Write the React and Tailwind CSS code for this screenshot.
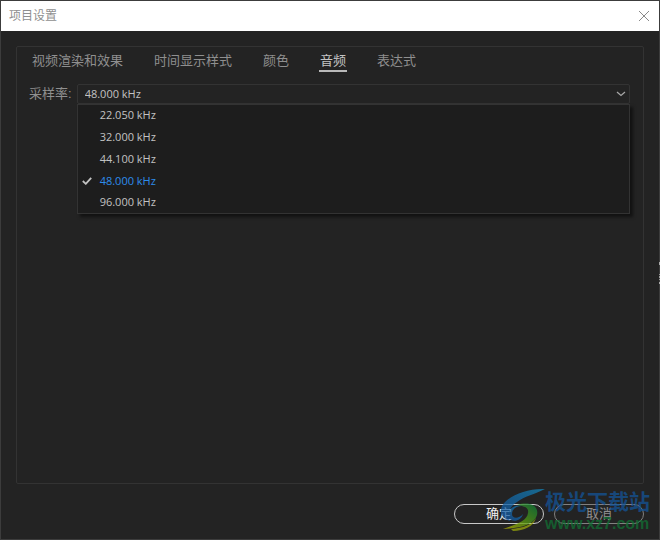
import React, { useState } from "react";

const TABS = ["视频渲染和效果", "时间显示样式", "颜色", "音频", "表达式"];
const RATES = ["22.050 kHz", "32.000 kHz", "44.100 kHz", "48.000 kHz", "96.000 kHz"];

const Watermark = () => (
    <div className="pointer-events-none absolute right-[9px] bottom-1 flex items-start opacity-75">
        <svg viewBox="0 0 46 44" className="h-11 w-[46px]" aria-hidden="true">
            <defs>
                <linearGradient id="wm-blue" x1="0" y1="1" x2="1" y2="0">
                    <stop offset="0" stopColor="#12519c" />
                    <stop offset="1" stopColor="#1583b5" />
                </linearGradient>
                <linearGradient id="wm-green" x1="0" y1="1" x2="1" y2="0">
                    <stop offset="0" stopColor="#c2b800" />
                    <stop offset="0.45" stopColor="#5c9c10" />
                    <stop offset="1" stopColor="#087a3c" />
                </linearGradient>
            </defs>
            <path
                d="M46 1C28 0 9 8 3 18C0 25 3 30 11 33C8 26 10 19 18 14C26 8 34 7 46 1Z"
                fill="url(#wm-blue)"
            />
            <path
                d="M28 19C20 16 13 20 13 26C13 31 20 31 24 26C22 33 14 35 9 30C6 23 15 14 28 19Z"
                fill="url(#wm-blue)"
            />
            <path
                d="M18 17C31 13 40 18 38 27C35 37 22 40 4 41C18 36 28 33 29 25C30 20 26 18 18 17Z"
                fill="url(#wm-green)"
            />
            <path d="M12 41C24 40 33 37 37 30C35 38 25 43 14 43Z" fill="#9aa80c" />
        </svg>
        <div className="flex flex-col pt-[3px] leading-[22px] font-bold">
            <span className="text-[21px] text-[#145497]">极光下载站</span>
            <span className="text-[16px] text-[#117034]">www.xz7.com</span>
        </div>
    </div>
);

const App = () => {
    const [tab, setTab] = useState("音频");
    const [rate, setRate] = useState("48.000 kHz");

    return (
        <div className="relative flex min-h-screen flex-col border border-[#3c3c3c] bg-[#232323] font-['Liberation_Sans','Noto_Sans_CJK_SC',sans-serif] text-[13px] text-[#8f8f8f]">
            {/* Title bar */}
            <header className="flex h-[30px] items-center justify-between bg-white pr-[9px] pl-2">
                <h1 className="text-xs text-[#8f8f8f]">项目设置</h1>
                <button type="button" aria-label="关闭">
                    <svg viewBox="0 0 12 12" className="size-3" aria-hidden="true">
                        <path d="M1 1L11 11M11 1L1 11" stroke="#8a8a8a" />
                    </svg>
                </button>
            </header>

            <main className="flex flex-1 flex-col px-[15px] pt-[15px]">
                <section className="flex-1 rounded-xs border border-[#333333] pr-[13px] pl-3">
                    {/* Tabs */}
                    <nav role="tablist" className="flex gap-[29px] pt-[5px] pl-[2px]">
                        {TABS.map((name) => (
                            <button
                                key={name}
                                type="button"
                                role="tab"
                                aria-selected={tab === name}
                                onClick={() => setTab(name)}
                                className={
                                    tab === name
                                        ? "border-b-2 border-[#b9b9b9] px-px leading-[18px] text-[#c4c4c4]"
                                        : "border-b-2 border-transparent px-px leading-[18px]"
                                }
                            >
                                {name}
                            </button>
                        ))}
                    </nav>

                    {/* Sample rate */}
                    <div className="mt-3 flex items-center gap-[5px]">
                        <label htmlFor="rate" className="leading-5">
                            采样率:
                        </label>
                        <div className="relative flex-1 font-['Open_Sans',sans-serif] text-[11px] text-[#c2c2c2]">
                            <select
                                id="rate"
                                value={rate}
                                onChange={(e) => setRate(e.target.value)}
                                className="block h-5 w-full appearance-none rounded-xs border border-[#333333] bg-[#232323] pl-[7px] leading-4"
                            >
                                {RATES.map((r) => (
                                    <option key={r}>{r}</option>
                                ))}
                            </select>
                            <svg
                                viewBox="0 0 10 6"
                                className="pointer-events-none absolute top-[7px] right-1 h-[6px] w-[10px]"
                                aria-hidden="true"
                            >
                                <path d="M1 1L5 4.5L9 1" fill="none" stroke="#a8a8a8" strokeWidth="1.2" />
                            </svg>

                            <ul
                                role="listbox"
                                aria-label="采样率"
                                className="absolute inset-x-0 top-full border border-[#333333] bg-[#1d1d1d] shadow-[3px_3px_3px_rgba(0,0,0,0.5)]"
                            >
                                {RATES.map((r) => (
                                    <li
                                        key={r}
                                        role="option"
                                        aria-selected={rate === r}
                                        className="h-[22px] first:h-[21px] last:h-[21px]"
                                    >
                                        <button
                                            type="button"
                                            onClick={() => setRate(r)}
                                            className={
                                                rate === r
                                                    ? "flex size-full items-center text-[#2d8ceb]"
                                                    : "flex size-full items-center"
                                            }
                                        >
                                            <span className="flex w-[22px] shrink-0 pl-1">
                                                {rate === r && (
                                                    <svg viewBox="0 0 10 8" className="h-2 w-[10px]" aria-hidden="true">
                                                        <path
                                                            d="M0.8 4L3.8 6.8L9.2 0.8"
                                                            fill="none"
                                                            stroke="#c2c2c2"
                                                            strokeWidth="1.8"
                                                        />
                                                    </svg>
                                                )}
                                            </span>
                                            {r}
                                        </button>
                                    </li>
                                ))}
                            </ul>
                        </div>
                    </div>
                </section>

                {/* Actions */}
                <footer className="flex justify-end gap-[10px] pt-5 pb-[15px]">
                    <button
                        type="button"
                        className="h-5 w-[90px] rounded-full border border-[#c8c8c8] leading-[18px] text-[#f0f0f0]"
                    >
                        确定
                    </button>
                    <button
                        type="button"
                        className="h-5 w-[90px] rounded-full border border-[#808080] leading-[18px] text-[#8f8f8f]"
                    >
                        取消
                    </button>
                </footer>
            </main>

            <Watermark />

            {/* Sliver of the window behind */}
            <div className="absolute top-[261px] -right-px flex w-px flex-col" aria-hidden="true">
                <span className="h-[3px] bg-[#aaaaaa]" />
                <span className="mt-[9px] h-px bg-[#999999]" />
                <span className="mt-px h-[2px] bg-[#999999]" />
                <span className="mt-px h-px bg-[#999999]" />
                <span className="mt-[2px] h-[2px] bg-[#aaaaaa]" />
            </div>
        </div>
    );
};

export default App;
